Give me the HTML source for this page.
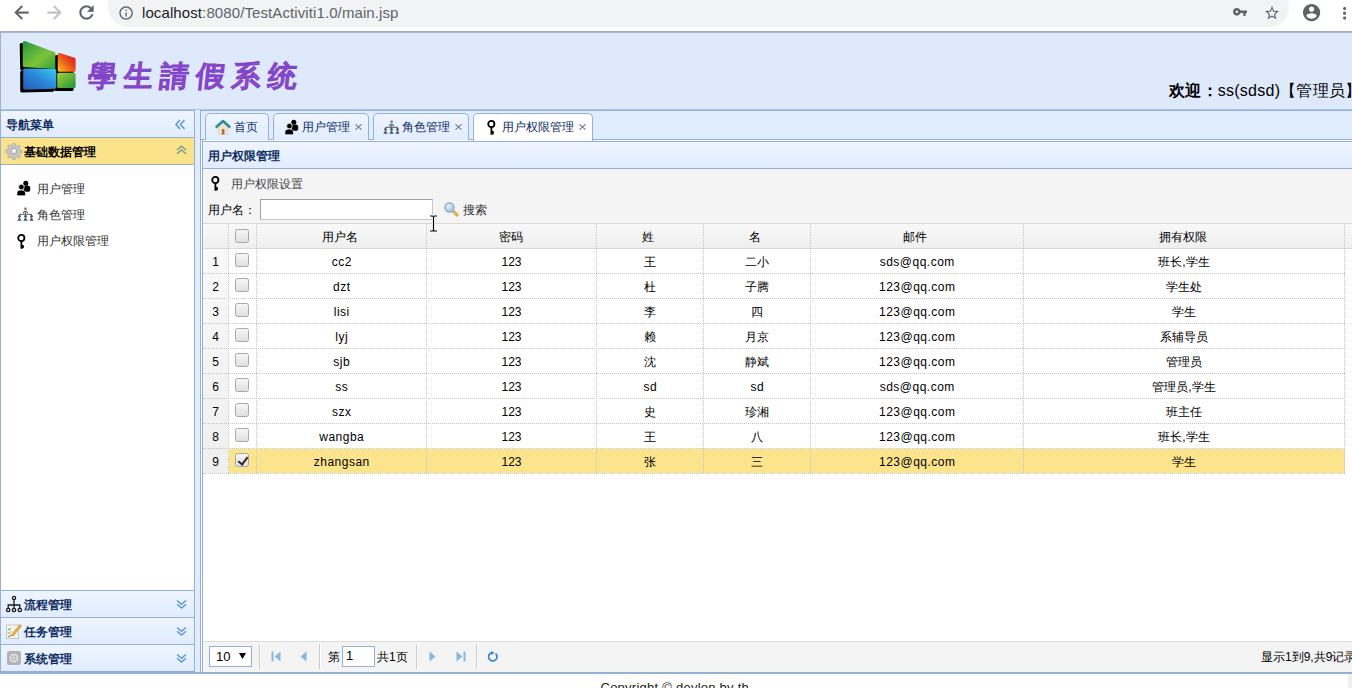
<!DOCTYPE html>
<html><head><meta charset="utf-8">
<style>
*{box-sizing:border-box;margin:0;padding:0}
html,body{width:1352px;height:688px;overflow:hidden;background:#fff;font-family:"Liberation Sans",sans-serif;font-size:12px;color:#000}
.abs{position:absolute}
svg{position:absolute;overflow:visible}
.t{position:absolute;white-space:nowrap;line-height:14px}
.b{font-weight:bold}
.phead{background:linear-gradient(#eff5ff,#e0ecff)}
.tab{position:absolute;top:113px;height:27px;border:1px solid #95b0d6;border-bottom:none;border-radius:5px 5px 0 0;background:linear-gradient(#eff5ff,#e0ecff)}
.tab.sel{background:#fff;height:28px}
.cell{position:absolute;top:0;height:25px;line-height:25px;text-align:center;font-size:12px;color:#000;white-space:nowrap}
.vl{position:absolute;top:224px;width:0;border-left:1px dotted #c4c4c4;height:249px}
.hl{position:absolute;left:203px;width:1142px;height:0;border-top:1px dotted #c4c4c4}
.cb{position:absolute;width:14px;height:14px;border:1px solid #a8a8a8;border-radius:2.5px;background:linear-gradient(#f6f6f6,#e0e0e0)}
.cb.chk::after{content:"";position:absolute;left:4.3px;top:0.6px;width:4.2px;height:8px;border:solid #2a2a2a;border-width:0 2.6px 2.6px 0;transform:rotate(38deg)}
.acc{position:absolute;left:1px;width:193px;height:27px;background:linear-gradient(#eff5ff,#e0ecff);border-top:1px solid #95b0d6}
.sep{position:absolute;top:644px;width:2px;height:25px;border-left:1px solid #ccc;border-right:1px solid #fff}
</style></head><body>
<!-- browser chrome -->
<div class="abs" style="left:108px;top:-14px;width:1181px;height:41px;border-radius:20px;background:#f1f3f4"></div>
<svg style="left:11px;top:2px" width="21" height="21" viewBox="0 0 24 24"><path fill="#5f6368" stroke="#5f6368" stroke-width="0.4" d="M20 11H7.83l5.59-5.59L12 4l-8 8 8 8 1.41-1.41L7.83 13H20v-2z"/></svg>
<svg style="left:43.5px;top:2px" width="21" height="21" viewBox="0 0 24 24"><path fill="#bfc2c5" stroke="#bfc2c5" stroke-width="0.4" d="M12 4l-1.41 1.41L16.17 11H4v2h12.17l-5.58 5.59L12 20l8-8z"/></svg>
<svg style="left:75.5px;top:2px" width="21" height="21" viewBox="0 0 24 24"><path fill="#5f6368" stroke="#5f6368" stroke-width="0.4" d="M17.65 6.35C16.2 4.9 14.21 4 12 4c-4.42 0-7.99 3.58-7.99 8s3.57 8 7.99 8c3.73 0 6.84-2.55 7.73-6h-2.08c-.82 2.33-3.04 4-5.65 4-3.31 0-6-2.69-6-6s2.69-6 6-6c1.66 0 3.14.69 4.22 1.78L13 11h7V4l-2.35 2.35z"/></svg>
<svg style="left:117.6px;top:4.6px" width="16.2" height="16.2" viewBox="0 0 24 24"><path fill="#5f6368" d="M11 7h2v2h-2zm0 4h2v6h-2zm1-9C6.48 2 2 6.48 2 12s4.48 10 10 10 10-4.48 10-10S17.52 2 12 2zm0 18c-4.41 0-8-3.59-8-8s3.59-8 8-8 8 3.59 8 8-3.59 8-8 8z"/></svg>
<div class="t" style="left:142px;top:4px;font-size:15px;line-height:18px;color:#202124;letter-spacing:0.1px">localhost<span style="color:#5f6368">:8080/TestActiviti1.0/main.jsp</span></div>
<svg style="left:1232.8px;top:8.4px" width="14" height="7.64" viewBox="1 6 22 12"><path fill="#5f6368" d="M12.65 10C11.83 7.67 9.61 6 7 6c-3.31 0-6 2.69-6 6s2.69 6 6 6c2.61 0 4.83-1.67 5.65-4H17v4h4v-4h2v-4H12.65zM7 14c-1.1 0-2-.9-2-2s.9-2 2-2 2 .9 2 2-.9 2-2 2z"/></svg>
<svg style="left:1265px;top:6.4px" width="14" height="13.3" viewBox="2 2 20 19"><path fill="#5f6368" d="M22 9.24l-7.19-.62L12 2 9.19 8.63 2 9.24l5.46 4.73L5.82 21 12 17.27 18.18 21l-1.63-7.03L22 9.24zM12 15.4l-3.76 2.27 1-4.28-3.32-2.88 4.38-.38L12 6.1l1.71 4.04 4.38.38-3.32 2.88 1 4.28L12 15.4z"/></svg>
<svg style="left:1303.4px;top:4.4px" width="17.2" height="17.2" viewBox="2 2 20 20"><path fill="#5f6368" d="M12 2C6.48 2 2 6.48 2 12s4.48 10 10 10 10-4.48 10-10S17.52 2 12 2zm0 3c1.66 0 3 1.34 3 3s-1.34 3-3 3-3-1.34-3-3 1.34-3 3-3zm0 14.2c-2.5 0-4.71-1.28-6-3.22.03-1.99 4-3.08 6-3.08 1.99 0 5.97 1.09 6 3.08-1.29 1.94-3.5 3.22-6 3.22z"/></svg>
<svg style="left:1342.6px;top:7px" width="3.2" height="12.7" viewBox="10 4 4 16"><path fill="#5f6368" d="M12 8c1.1 0 2-.9 2-2s-.9-2-2-2-2 .9-2 2 .9 2 2 2zm0 2c-1.1 0-2 .9-2 2s.9 2 2 2 2-.9 2-2-.9-2-2-2zm0 6c-1.1 0-2 .9-2 2s.9 2 2 2 2-.9 2-2-.9-2-2-2z"/></svg>

<!-- app background -->
<div class="abs" style="left:0;top:31px;width:1352px;height:643px;background:#e0ecff"></div>
<!-- north -->
<div class="abs" style="left:0;top:31px;width:1352px;height:79px;background:#dee9fc;border-top:1px solid #a3adbd;border-bottom:1px solid #b2c3dc;border-left:1px solid #9db2d0"></div>
<div class="abs" style="left:0;top:32px;width:1352px;height:1px;background:#a4b6d0"></div>
<!-- logo -->
<svg style="left:14px;top:38px" width="66" height="56" viewBox="0 0 66 56">
  <defs>
    <linearGradient id="gg" x1="0" y1="0" x2="1" y2="1"><stop offset="0" stop-color="#2a9a3c"/><stop offset="0.6" stop-color="#7cc43a"/><stop offset="1" stop-color="#3aa23a"/></linearGradient>
    <linearGradient id="rg" x1="0" y1="1" x2="1" y2="0"><stop offset="0" stop-color="#f7b21c"/><stop offset="0.6" stop-color="#e8441c"/><stop offset="1" stop-color="#d81c1c"/></linearGradient>
    <linearGradient id="bg" x1="0" y1="1" x2="1" y2="0"><stop offset="0" stop-color="#2a5cb4"/><stop offset="0.5" stop-color="#2a86d8"/><stop offset="1" stop-color="#38c4f0"/></linearGradient>
    <linearGradient id="g2" x1="0" y1="0" x2="1" y2="1"><stop offset="0" stop-color="#9ccc34"/><stop offset="1" stop-color="#2a9a3c"/></linearGradient>
  </defs>
  <g stroke-linejoin="round" stroke-width="3">
  <path d="M7.2 6.5 L37.8 16.5 L37.8 32.5 L7.7 31 Z" fill="#000" stroke="#000"/>
  <path d="M42.2 18.5 L58.1 22.2 L58.1 35.3 L42.2 35.3 Z" fill="#000" stroke="#000"/>
  <path d="M7.7 34 L38.8 34.5 L38.8 52.3 L7.7 53 Z" fill="#000" stroke="#000"/>
  <path d="M41.7 38.3 L58.1 38.3 L58.1 51.4 L41.7 51.4 Z" fill="#000" stroke="#000"/>
  <path d="M10.2 4.5 L39.8 15.5 L39.8 29.5 L10.2 27.5 Z" fill="url(#gg)" stroke="url(#gg)"/>
  <path d="M45.2 16.5 L60.1 21.2 L60.1 32.3 L45.2 32.3 Z" fill="url(#rg)" stroke="url(#rg)"/>
  <path d="M10.7 32 L40.8 32.5 L40.8 49.3 L10.7 50.3 Z" fill="url(#bg)" stroke="url(#bg)"/>
  <path d="M44.7 36.3 L60.1 36.3 L60.1 48.4 L44.7 48.4 Z" fill="url(#g2)" stroke="url(#g2)"/>
  </g>
</svg>
<div class="t" style="left:88px;top:59px;font-size:29px;line-height:34px;color:#9f62dc;font-weight:normal;letter-spacing:7px;-webkit-text-stroke:1.6px #8444c8;transform:skewX(-6deg);transform-origin:0 50%">學生請假系统</div>
<div class="t" style="left:1169px;top:81px;font-size:16px;line-height:20px;letter-spacing:0.25px"><b>欢迎：</b>ss(sdsd)【管理员】</div>

<!-- west panel -->
<div class="abs" style="left:0;top:110px;width:195px;height:563px;background:#fff;border:1px solid #95b0d6"></div>
<div class="abs phead" style="left:1px;top:111px;width:193px;height:26px"></div>
<div class="abs" style="left:1px;top:137px;width:193px;height:28px;background:#fbe38c;border-top:1px solid #95b0d6;border-bottom:1px solid #95b0d6"></div>
<div class="t b" style="left:6px;top:118px;color:#0e2d5f">导航菜单</div>
<svg style="left:175.3px;top:118.5px" width="11" height="12" viewBox="0 0 11 12"><path d="M5 1 L1 5.5 L5 10 M9.5 1 L5.5 5.5 L9.5 10" fill="none" stroke="#5a98d6" stroke-width="1.5"/></svg>
<!-- gear -->
<svg style="left:6px;top:143px" width="16" height="16" viewBox="0 0 16 16">
  <g fill="#c6c6c6" stroke="#a6a6a6" stroke-width="0.6">
  <path d="M6.8 0.5h2.4l0.4 2.1 1.5 0.6 1.8-1.2 1.7 1.7-1.2 1.8 0.6 1.5 2.1 0.4v2.4l-2.1 0.4-0.6 1.5 1.2 1.8-1.7 1.7-1.8-1.2-1.5 0.6-0.4 2.1H6.8l-0.4-2.1-1.5-0.6-1.8 1.2-1.7-1.7 1.2-1.8-0.6-1.5-2.1-0.4V6.8l2.1-0.4 0.6-1.5-1.2-1.8 1.7-1.7 1.8 1.2 1.5-0.6z"/>
  </g>
  <circle cx="8" cy="8" r="2.8" fill="#f0f0e0" stroke="#999" stroke-width="0.8"/>
</svg>
<div class="t b" style="left:24px;top:145px;color:#000">基础数据管理</div>
<svg style="left:175.5px;top:145px" width="12" height="11" viewBox="0 0 12 11"><path d="M1 5 L5.5 1.2 L10 5 M1 8.8 L5.5 5 L10 8.8" fill="none" stroke="#72a090" stroke-width="1.5"/></svg>

<!-- west items -->
<svg style="left:17px;top:181px" width="14" height="15" viewBox="0 0 14 15"><g fill="#000" stroke="#fff" stroke-width="0.7"><circle cx="8.8" cy="2.3" r="2.5" stroke="none"/><rect x="6.6" y="4.6" width="6.6" height="6.2" rx="2.6" stroke="none"/><circle cx="4.4" cy="6.1" r="2.8"/><path d="M-0.1 14.8 V12.2 Q-0.1 9 4.2 9 Q8.5 9 8.5 12.2 V14.8 Z"/></g></svg>
<div class="t" style="left:37px;top:182px;color:#333">用户管理</div>
<svg style="left:17px;top:207px" width="17" height="14" viewBox="0 0 17 14"><g fill="none" stroke="#444" stroke-width="0.9"><path d="M8.5 5.5 V7.3 M2.5 9 V7.3 H14.5 V9"/><path d="M6.2 6 Q8.5 2.6 10.8 6" stroke="#555" stroke-width="1.3"/></g><g fill="#555"><circle cx="8.5" cy="1.8" r="1.5" fill="#888"/><circle cx="2.5" cy="9.4" r="1.3"/><path d="M0.3 13.8 L2.5 10.2 L4.7 13.8Z"/><circle cx="8.5" cy="9.4" r="1.3" fill="#2a5a78"/><path d="M6.3 13.8 L8.5 10.2 L10.7 13.8Z" fill="#2a5a78"/><circle cx="14.5" cy="9.4" r="1.3"/><path d="M12.3 13.8 L14.5 10.2 L16.7 13.8Z"/></g></svg>
<div class="t" style="left:37px;top:208px;color:#333">角色管理</div>
<svg style="left:16.8px;top:233.5px" width="9" height="15" viewBox="0 0 9 15"><circle cx="4.3" cy="4" r="3.1" fill="none" stroke="#000" stroke-width="1.8"/><path d="M3.5 6.8 H5.3 V10.8 L6.9 11.4 V13.8 L5.3 14.7 H3.5 Z" fill="#000"/></svg>
<div class="t" style="left:37px;top:234px;color:#333">用户权限管理</div>

<!-- bottom accordions -->
<div class="acc" style="top:590px"></div>
<div class="acc" style="top:617px"></div>
<div class="acc" style="top:644px;height:28px"></div>
<div class="abs" style="left:0;top:671px;width:195px;height:2px;background:#95b0d6"></div>
<svg style="left:6px;top:596px" width="16" height="16" viewBox="0 0 16 16"><g fill="none" stroke="#1a1a1a" stroke-width="1.3"><circle cx="8" cy="2" r="1.6"/><path d="M8 3.6 V9 M2.2 12.2 V9 H13.8 V12.2 M8 9 V12.2"/><circle cx="2.2" cy="14" r="1.7"/><circle cx="8" cy="14" r="1.7"/><circle cx="13.8" cy="14" r="1.7"/></g></svg>
<div class="t b" style="left:24px;top:598px;color:#0e2d5f">流程管理</div>
<svg style="left:175.5px;top:599px" width="12" height="11" viewBox="0 0 12 11"><path d="M1 1.5 L5.5 5.3 L10 1.5 M1 5.2 L5.5 9 L10 5.2" fill="none" stroke="#5a98d6" stroke-width="1.5"/></svg>
<svg style="left:6px;top:623px" width="16" height="16" viewBox="0 0 16 16"><rect x="0.5" y="2" width="12" height="13.5" fill="#f4f4ec" stroke="#c8c8c0" stroke-width="1"/><path d="M2 6 L3 7 L5 5 M2 9.5 L3 10.5 L5 8.5 M2 13 L3 14 L5 12" fill="none" stroke="#5aa040" stroke-width="1"/><path d="M6 11 L14 1.5 L15.5 3 L7.5 12.5 L5.5 13 Z" fill="#f0b040" stroke="#c08020" stroke-width="0.6"/></svg>
<div class="t b" style="left:24px;top:625px;color:#0e2d5f">任务管理</div>
<svg style="left:175.5px;top:626px" width="12" height="11" viewBox="0 0 12 11"><path d="M1 1.5 L5.5 5.3 L10 1.5 M1 5.2 L5.5 9 L10 5.2" fill="none" stroke="#5a98d6" stroke-width="1.5"/></svg>
<svg style="left:7px;top:651px" width="14" height="14" viewBox="0 0 14 14"><rect x="0" y="0" width="14" height="14" rx="2" fill="#b4b4b4"/><circle cx="7" cy="7" r="3.5" fill="none" stroke="#e8e8e8" stroke-width="1.6"/><path d="M6 5 L8.5 7 L6 9Z" fill="#e8e8e8"/></svg>
<div class="t b" style="left:24px;top:652px;color:#0e2d5f">系统管理</div>
<svg style="left:175.5px;top:653px" width="12" height="11" viewBox="0 0 12 11"><path d="M1 1.5 L5.5 5.3 L10 1.5 M1 5.2 L5.5 9 L10 5.2" fill="none" stroke="#5a98d6" stroke-width="1.5"/></svg>

<!-- center -->
<div class="abs" style="left:200px;top:110px;width:1152px;height:563px;background:#fff;border-left:1px solid #95b0d6;border-top:1px solid #95b0d6"></div>
<div class="abs" style="left:201px;top:111px;width:1151px;height:29px;background:#e0ecff;border-bottom:1px solid #95b0d6"></div>
<div class="abs" style="left:202px;top:140px;width:1150px;height:533px;background:#fff;border-left:1px solid #95b0d6"></div>
<div class="tab" style="left:205px;width:64px"></div>
<div class="tab" style="left:273px;width:96px"></div>
<div class="tab" style="left:373px;width:96px"></div>
<div class="tab sel" style="left:473px;width:120px"></div>
<!-- house -->
<svg style="left:215px;top:120px" width="16" height="15" viewBox="0 0 16 15"><path d="M3.5 7 V14.5 H12.5 V7 L8 3.5Z" fill="#f0e4d0" stroke="#d8c8b0" stroke-width="0.5"/><rect x="6.8" y="9" width="2.6" height="5.5" fill="#b07030"/><path d="M0.8 7.5 L8 1 L15.2 7.5" fill="none" stroke="#2f8c9c" stroke-width="2.6" stroke-linejoin="round"/></svg>
<div class="t" style="left:234px;top:120px;color:#0e2d5f">首页</div>
<svg style="left:285px;top:120px" width="14" height="15" viewBox="0 0 14 15"><g fill="#000" stroke="#fff" stroke-width="0.7"><circle cx="8.8" cy="2.3" r="2.5" stroke="none"/><rect x="6.6" y="4.6" width="6.6" height="6.2" rx="2.6" stroke="none"/><circle cx="4.4" cy="6.1" r="2.8"/><path d="M-0.1 14.8 V12.2 Q-0.1 9 4.2 9 Q8.5 9 8.5 12.2 V14.8 Z"/></g></svg>
<div class="t" style="left:302px;top:120px;color:#0e2d5f">用户管理</div>
<svg style="left:354.5px;top:123.9px" width="7" height="6" viewBox="0 0 7 6"><path d="M0.5 0.3 L6.5 5.7 M6.5 0.3 L0.5 5.7" stroke="#6a7a90" stroke-width="1.1"/></svg>
<svg style="left:383px;top:120px" width="17" height="14" viewBox="0 0 17 14"><g fill="none" stroke="#444" stroke-width="0.9"><path d="M8.5 5.5 V7.3 M2.5 9 V7.3 H14.5 V9"/><path d="M6.2 6 Q8.5 2.6 10.8 6" stroke="#555" stroke-width="1.3"/></g><g fill="#555"><circle cx="8.5" cy="1.8" r="1.5" fill="#888"/><circle cx="2.5" cy="9.4" r="1.3"/><path d="M0.3 13.8 L2.5 10.2 L4.7 13.8Z"/><circle cx="8.5" cy="9.4" r="1.3" fill="#2a5a78"/><path d="M6.3 13.8 L8.5 10.2 L10.7 13.8Z" fill="#2a5a78"/><circle cx="14.5" cy="9.4" r="1.3"/><path d="M12.3 13.8 L14.5 10.2 L16.7 13.8Z"/></g></svg>
<div class="t" style="left:402px;top:120px;color:#0e2d5f">角色管理</div>
<svg style="left:454.5px;top:123.9px" width="7" height="6" viewBox="0 0 7 6"><path d="M0.5 0.3 L6.5 5.7 M6.5 0.3 L0.5 5.7" stroke="#6a7a90" stroke-width="1.1"/></svg>
<svg style="left:486.7px;top:120px" width="9" height="15" viewBox="0 0 9 15"><circle cx="4.3" cy="4" r="3.1" fill="none" stroke="#000" stroke-width="1.8"/><path d="M3.5 6.8 H5.3 V10.8 L6.9 11.4 V13.8 L5.3 14.7 H3.5 Z" fill="#000"/></svg>
<div class="t" style="left:502px;top:120px;color:#0e2d5f">用户权限管理</div>
<svg style="left:578.5px;top:123.9px" width="7" height="6" viewBox="0 0 7 6"><path d="M0.5 0.3 L6.5 5.7 M6.5 0.3 L0.5 5.7" stroke="#6a7a90" stroke-width="1.1"/></svg>

<!-- panel header -->
<div class="abs phead" style="left:203px;top:141px;width:1149px;height:28px;border-top:1px solid #95b0d6;border-bottom:1px solid #95b0d6"></div>
<div class="t b" style="left:208px;top:149px;color:#0e2d5f">用户权限管理</div>
<!-- toolbar -->
<div class="abs" style="left:203px;top:169px;width:1149px;height:54px;background:#f4f4f4"></div>
<svg style="left:210.6px;top:176.3px" width="9" height="15" viewBox="0 0 9 15"><circle cx="4.3" cy="4" r="3.1" fill="none" stroke="#000" stroke-width="1.8"/><path d="M3.5 6.8 H5.3 V10.8 L6.9 11.4 V13.8 L5.3 14.7 H3.5 Z" fill="#000"/></svg>
<div class="t" style="left:231px;top:177px;color:#444">用户权限设置</div>
<div class="t" style="left:208px;top:203px;color:#000">用户名：</div>
<div class="abs" style="left:260px;top:199px;width:173px;height:21px;background:#fff;border:1px solid #a9a9a9;border-color:#a0a0a0 #c8c8c8 #c8c8c8 #a0a0a0"></div>
<svg style="left:444px;top:202px" width="15" height="15" viewBox="0 0 15 15"><defs><radialGradient id="lens" cx="0.4" cy="0.35" r="0.7"><stop offset="0" stop-color="#e8f4ff"/><stop offset="1" stop-color="#8ab8e8"/></radialGradient></defs><path d="M8.5 8.5 L13 13" stroke="#c89028" stroke-width="3" stroke-linecap="round"/><path d="M8.5 8.5 L13 13" stroke="#f0c860" stroke-width="1.4" stroke-linecap="round"/><circle cx="5.5" cy="5.5" r="4.6" fill="url(#lens)" stroke="#98a8b8" stroke-width="1.2"/></svg>
<div class="t" style="left:463px;top:203px;color:#333">搜索</div>

<!-- datagrid -->
<div class="abs" style="left:203px;top:223px;width:1149px;height:26px;background:linear-gradient(#f9f9f9,#efefef);border-top:1px solid #d8d8d8;border-bottom:1px solid #d8d8d8"></div>
<div class="abs" style="left:203px;top:249px;width:25px;height:224px;background:linear-gradient(#f9f9f9,#efefef)"></div>
<div class="abs" style="left:229px;top:449px;width:1116px;height:24px;background:#fbe48b"></div>
<div class="cell" style="left:255px;top:224.5px;width:169px">用户名</div>
<div class="cell" style="left:426px;top:224.5px;width:169px">密码</div>
<div class="cell" style="left:595px;top:224.5px;width:106px">姓</div>
<div class="cell" style="left:702px;top:224.5px;width:106px">名</div>
<div class="cell" style="left:809px;top:224.5px;width:212px">邮件</div>
<div class="cell" style="left:1023px;top:224.5px;width:320px">拥有权限</div>
<div class="vl" style="left:228px"></div>
<div class="vl" style="left:256px"></div>
<div class="vl" style="left:426px"></div>
<div class="vl" style="left:596px"></div>
<div class="vl" style="left:703px"></div>
<div class="vl" style="left:810px"></div>
<div class="vl" style="left:1023px"></div>
<div class="vl" style="left:1344px"></div>
<div class="hl" style="top:273px"></div>
<div class="cell" style="left:203px;top:250px;width:25px">1</div>
<div class="cb" style="left:235px;top:253px"></div>
<div class="cell" style="left:257px;top:250px;width:169px;letter-spacing:0.5px;text-indent:0.5px">cc2</div>
<div class="cell" style="left:427px;top:250px;width:169px">123</div>
<div class="cell" style="left:597px;top:250px;width:106px">王</div>
<div class="cell" style="left:704px;top:250px;width:106px">二小</div>
<div class="cell" style="left:811px;top:250px;width:212px;letter-spacing:0.5px;text-indent:0.5px">sds@qq.com</div>
<div class="cell" style="left:1024px;top:250px;width:320px">班长,学生</div>
<div class="hl" style="top:298px"></div>
<div class="cell" style="left:203px;top:275px;width:25px">2</div>
<div class="cb" style="left:235px;top:278px"></div>
<div class="cell" style="left:257px;top:275px;width:169px;letter-spacing:0.5px;text-indent:0.5px">dzt</div>
<div class="cell" style="left:427px;top:275px;width:169px">123</div>
<div class="cell" style="left:597px;top:275px;width:106px">杜</div>
<div class="cell" style="left:704px;top:275px;width:106px">子腾</div>
<div class="cell" style="left:811px;top:275px;width:212px;letter-spacing:0.5px;text-indent:0.5px">123@qq.com</div>
<div class="cell" style="left:1024px;top:275px;width:320px">学生处</div>
<div class="hl" style="top:323px"></div>
<div class="cell" style="left:203px;top:300px;width:25px">3</div>
<div class="cb" style="left:235px;top:303px"></div>
<div class="cell" style="left:257px;top:300px;width:169px;letter-spacing:0.5px;text-indent:0.5px">lisi</div>
<div class="cell" style="left:427px;top:300px;width:169px">123</div>
<div class="cell" style="left:597px;top:300px;width:106px">李</div>
<div class="cell" style="left:704px;top:300px;width:106px">四</div>
<div class="cell" style="left:811px;top:300px;width:212px;letter-spacing:0.5px;text-indent:0.5px">123@qq.com</div>
<div class="cell" style="left:1024px;top:300px;width:320px">学生</div>
<div class="hl" style="top:348px"></div>
<div class="cell" style="left:203px;top:325px;width:25px">4</div>
<div class="cb" style="left:235px;top:328px"></div>
<div class="cell" style="left:257px;top:325px;width:169px;letter-spacing:0.5px;text-indent:0.5px">lyj</div>
<div class="cell" style="left:427px;top:325px;width:169px">123</div>
<div class="cell" style="left:597px;top:325px;width:106px">赖</div>
<div class="cell" style="left:704px;top:325px;width:106px">月京</div>
<div class="cell" style="left:811px;top:325px;width:212px;letter-spacing:0.5px;text-indent:0.5px">123@qq.com</div>
<div class="cell" style="left:1024px;top:325px;width:320px">系辅导员</div>
<div class="hl" style="top:373px"></div>
<div class="cell" style="left:203px;top:350px;width:25px">5</div>
<div class="cb" style="left:235px;top:353px"></div>
<div class="cell" style="left:257px;top:350px;width:169px;letter-spacing:0.5px;text-indent:0.5px">sjb</div>
<div class="cell" style="left:427px;top:350px;width:169px">123</div>
<div class="cell" style="left:597px;top:350px;width:106px">沈</div>
<div class="cell" style="left:704px;top:350px;width:106px">静斌</div>
<div class="cell" style="left:811px;top:350px;width:212px;letter-spacing:0.5px;text-indent:0.5px">123@qq.com</div>
<div class="cell" style="left:1024px;top:350px;width:320px">管理员</div>
<div class="hl" style="top:398px"></div>
<div class="cell" style="left:203px;top:375px;width:25px">6</div>
<div class="cb" style="left:235px;top:378px"></div>
<div class="cell" style="left:257px;top:375px;width:169px;letter-spacing:0.5px;text-indent:0.5px">ss</div>
<div class="cell" style="left:427px;top:375px;width:169px">123</div>
<div class="cell" style="left:597px;top:375px;width:106px;letter-spacing:0.5px;text-indent:0.5px">sd</div>
<div class="cell" style="left:704px;top:375px;width:106px;letter-spacing:0.5px;text-indent:0.5px">sd</div>
<div class="cell" style="left:811px;top:375px;width:212px;letter-spacing:0.5px;text-indent:0.5px">sds@qq.com</div>
<div class="cell" style="left:1024px;top:375px;width:320px">管理员,学生</div>
<div class="hl" style="top:423px"></div>
<div class="cell" style="left:203px;top:400px;width:25px">7</div>
<div class="cb" style="left:235px;top:403px"></div>
<div class="cell" style="left:257px;top:400px;width:169px;letter-spacing:0.5px;text-indent:0.5px">szx</div>
<div class="cell" style="left:427px;top:400px;width:169px">123</div>
<div class="cell" style="left:597px;top:400px;width:106px">史</div>
<div class="cell" style="left:704px;top:400px;width:106px">珍湘</div>
<div class="cell" style="left:811px;top:400px;width:212px;letter-spacing:0.5px;text-indent:0.5px">123@qq.com</div>
<div class="cell" style="left:1024px;top:400px;width:320px">班主任</div>
<div class="hl" style="top:448px"></div>
<div class="cell" style="left:203px;top:425px;width:25px">8</div>
<div class="cb" style="left:235px;top:428px"></div>
<div class="cell" style="left:257px;top:425px;width:169px;letter-spacing:0.5px;text-indent:0.5px">wangba</div>
<div class="cell" style="left:427px;top:425px;width:169px">123</div>
<div class="cell" style="left:597px;top:425px;width:106px">王</div>
<div class="cell" style="left:704px;top:425px;width:106px">八</div>
<div class="cell" style="left:811px;top:425px;width:212px;letter-spacing:0.5px;text-indent:0.5px">123@qq.com</div>
<div class="cell" style="left:1024px;top:425px;width:320px">班长,学生</div>
<div class="hl" style="top:473px"></div>
<div class="cell" style="left:203px;top:450px;width:25px">9</div>
<div class="cb chk" style="left:235px;top:453px"></div>
<div class="cell" style="left:257px;top:450px;width:169px;letter-spacing:0.5px;text-indent:0.5px">zhangsan</div>
<div class="cell" style="left:427px;top:450px;width:169px">123</div>
<div class="cell" style="left:597px;top:450px;width:106px">张</div>
<div class="cell" style="left:704px;top:450px;width:106px">三</div>
<div class="cell" style="left:811px;top:450px;width:212px;letter-spacing:0.5px;text-indent:0.5px">123@qq.com</div>
<div class="cell" style="left:1024px;top:450px;width:320px">学生</div>
<div class="cb" style="left:235px;top:229px"></div>

<!-- pager -->
<div class="abs" style="left:203px;top:641px;width:1149px;height:31px;background:#f4f4f4;border-top:1px solid #dcdcdc"></div>
<div class="abs" style="left:209px;top:646px;width:43px;height:21px;background:#fff;border:1px solid #95b0d6"></div>
<div class="t" style="left:216px;top:650px;font-size:13px;color:#000">10</div>
<svg style="left:239px;top:653px" width="7" height="6" viewBox="0 0 7 6"><path d="M0 0 H7 L3.5 6Z" fill="#000"/></svg>
<div class="sep" style="left:259px"></div>
<svg style="left:271px;top:651px" width="10" height="11" viewBox="0 0 10 11"><path d="M0.5 0.5 H2.5 V10.5 H0.5Z M9.5 0.5 V10.5 L3.5 5.5Z" fill="#86b8e0"/></svg>
<svg style="left:300px;top:651px" width="7" height="11" viewBox="0 0 7 11"><path d="M6.5 0.5 V10.5 L0.5 5.5Z" fill="#86b8e0"/></svg>
<div class="sep" style="left:319px"></div>
<div class="t" style="left:328px;top:650px">第</div>
<div class="abs" style="left:342px;top:646px;width:33px;height:21px;background:#fff;border:1px solid #95b0d6"></div>
<div class="t" style="left:346px;top:649px;font-size:13px">1</div>
<div class="t" style="left:377px;top:650px">共1页</div>
<div class="sep" style="left:416px"></div>
<svg style="left:429px;top:651px" width="7" height="11" viewBox="0 0 7 11"><path d="M0.5 0.5 V10.5 L6.5 5.5Z" fill="#86b8e0"/></svg>
<svg style="left:456px;top:651px" width="10" height="11" viewBox="0 0 10 11"><path d="M7.5 0.5 H9.5 V10.5 H7.5Z M0.5 0.5 V10.5 L6.5 5.5Z" fill="#86b8e0"/></svg>
<div class="sep" style="left:476px"></div>
<svg style="left:487px;top:651px" width="12" height="12" viewBox="0 0 12 12"><path d="M8.6 2.6 A4.2 4.2 0 1 1 5 1.6" fill="none" stroke="#3a86c8" stroke-width="1.8"/><path d="M4 0 L7.5 1.8 L4.3 4Z" fill="#3a86c8"/></svg>
<div class="t" style="left:1261px;top:650px">显示1到9,共9记录</div>

<!-- footer -->
<div class="abs" style="left:0;top:672px;width:1352px;height:2px;background:#95b0d6"></div>
<div class="abs" style="left:0;top:674px;width:1352px;height:14px;background:#fff"></div>
<div class="abs" style="left:1348px;top:674px;width:4px;height:14px;background:#efefef"></div>
<div class="t" style="left:600.5px;top:681px;font-size:13px;letter-spacing:0.25px;color:#222">Copyright © devlon by th</div>

<!-- cursor -->
<svg style="left:429px;top:215px" width="9" height="17" viewBox="0 0 9 17"><path d="M1 1 H3.5 Q4.5 1 4.5 2 V15 Q4.5 16 3.5 16 H1 M8 1 H5.5 Q4.5 1 4.5 2 M4.5 15 Q4.5 16 5.5 16 H8" fill="none" stroke="#fff" stroke-width="3"/><path d="M1 1 H3.5 Q4.5 1 4.5 2 V15 Q4.5 16 3.5 16 H1 M8 1 H5.5 Q4.5 1 4.5 2 M4.5 15 Q4.5 16 5.5 16 H8" fill="none" stroke="#000" stroke-width="1.2"/></svg>
</body></html>
